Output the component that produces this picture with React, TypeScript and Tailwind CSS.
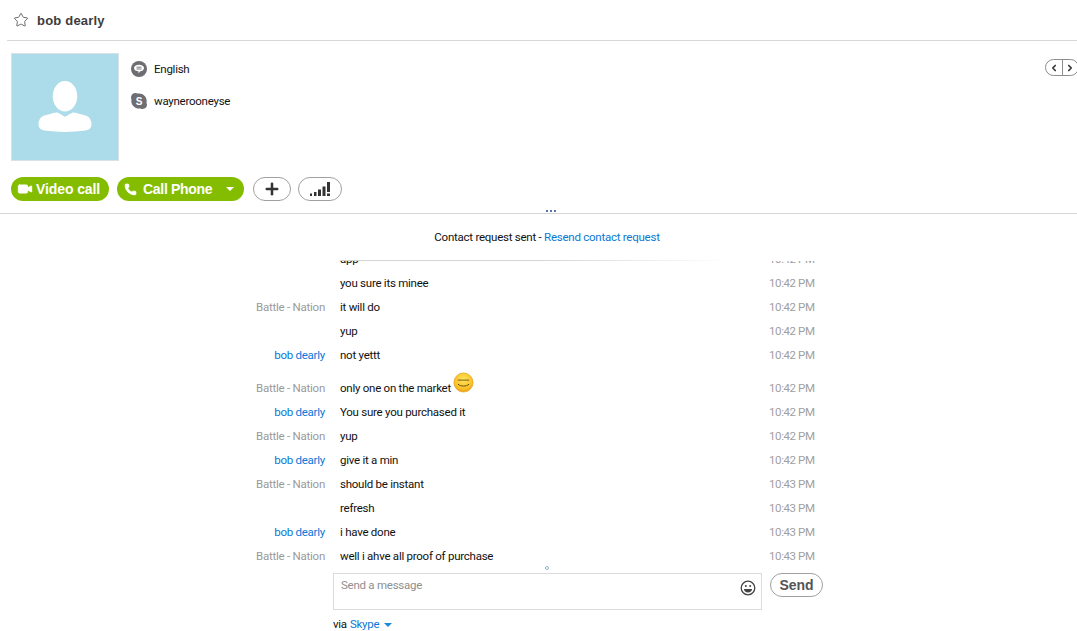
import React from 'react';
import { Star, Video, Phone, Plus, ChevronLeft, ChevronRight } from 'lucide-react';

interface ChatRow {
  name?: string;
  me?: boolean;
  text: string;
  time: string;
  emoticon?: boolean;
}

const rows: ChatRow[] = [
  { text: 'you sure its minee', time: '10:42 PM' },
  { name: 'Battle - Nation', text: 'it will do', time: '10:42 PM' },
  { text: 'yup', time: '10:42 PM' },
  { name: 'bob dearly', me: true, text: 'not yettt', time: '10:42 PM' },
  { name: 'Battle - Nation', text: 'only one on the market', time: '10:42 PM', emoticon: true },
  { name: 'bob dearly', me: true, text: 'You sure you purchased it', time: '10:42 PM' },
  { name: 'Battle - Nation', text: 'yup', time: '10:42 PM' },
  { name: 'bob dearly', me: true, text: 'give it a min', time: '10:42 PM' },
  { name: 'Battle - Nation', text: 'should be instant', time: '10:43 PM' },
  { text: 'refresh', time: '10:43 PM' },
  { name: 'bob dearly', me: true, text: 'i have done', time: '10:43 PM' },
  { name: 'Battle - Nation', text: 'well i ahve all proof of purchase', time: '10:43 PM' },
];

const Emoticon = () => (
  <svg viewBox="0 0 22 22" className="w-[21px] h-[21px] ml-[2px] mb-[13px] shrink-0">
    <defs>
      <radialGradient id="smile" cx="50%" cy="35%" r="70%">
        <stop offset="0%" stopColor="#fde45c" />
        <stop offset="70%" stopColor="#f8c025" />
        <stop offset="100%" stopColor="#e9920f" />
      </radialGradient>
    </defs>
    <circle cx="11" cy="11" r="10" fill="url(#smile)" stroke="#e8a020" strokeWidth="0.8" />
    <path d="M5.500 8.500h11" stroke="#6b4a10" strokeWidth="0.9" strokeLinecap="round" />
    <path d="M5.500 13c2.500 2.400 8.500 2.400 11 0" stroke="#6b4a10" strokeWidth="1" fill="none" strokeLinecap="round" />
  </svg>
);

const App: React.FC = () => {
  return (
    <div className="w-[1077px] h-[631px] overflow-hidden bg-white text-[11.5px] text-[#111] font-['Roboto',sans-serif] tracking-[-0.25px]">
      {/* Header */}
      <div className="ml-[7px] h-[41px] flex items-center pl-[6px] border-b border-[#d8d8d8]">
        <Star size={16} strokeWidth={1.3} className="text-[#555]" />
        <span className="ml-[8px] pt-[1px] text-[13px] font-bold text-[#3d3d3d] tracking-[0.2px] font-['Liberation_Sans',sans-serif]">bob dearly</span>
      </div>

      {/* Profile */}
      <div className="h-[173px] border-b border-[#d8d8d8] pl-[11px] pt-[12px]">
        <div className="flex">
          <div className="w-[108px] h-[108px] bg-[#acdbea] border border-[#d8e2e6] flex items-center justify-center">
            <svg viewBox="0 0 108 108" className="w-[106px] h-[106px]">
              <ellipse cx="54" cy="43" rx="12.500" ry="15.500" fill="#fff" />
              <path d="M27 72c0-6 3-9 9-10 5-1 8-3 11-2 3 1 5 3 7 4 2-1 4-3 7-4 3-1 6 1 11 2 6 1 9 4 9 10 0 3-2 5-6 6-14 2-28 2-42 0-4-1-6-3-6-6z" fill="#fff" />
            </svg>
          </div>
          <div className="ml-[12px] pt-[8px] flex-1 flex flex-col gap-[16px]">
            <div className="flex items-center h-[16px]">
              <svg viewBox="0 0 16 16" className="w-[16px] h-[16px]">
                <circle cx="8" cy="8" r="8" fill="#6d6d72" />
                <path d="M3 7c0-2 2-3.300 5-3.300S13 5 13 7s-2 3.300-3.800 3.300L7.500 12.500v-2.200C5 10.300 3 9 3 7z" fill="#fff" />
                <path d="M5.500 6.200h5M5.500 8h5" stroke="#6d6d72" strokeWidth="0.9" />
              </svg>
              <span className="ml-[7px] pt-[2px]">English</span>
            </div>
            <div className="flex items-center h-[16px]">
              <svg viewBox="0 0 16 16" className="w-[16px] h-[16px]">
                <path d="M4.500 0C2 0 0 2 0 4.500c0 .8.200 1.500.500 2.100C.400 7 .300 7.500.300 8c0 4.200 3.500 7.600 7.700 7.600.500 0 1-.1 1.500-.2.800.400 1.500.600 2.300.600 2.300 0 4.200-1.900 4.200-4.200 0-.7-.2-1.300-.5-1.900.100-.6.200-1.200.200-1.900C15.700 3.700 12.200.4 8 .4c-.5 0-.9 0-1.400.1C6 .2 5.300 0 4.500 0z" fill="#6d6d72" />
                <text x="8" y="12" textAnchor="middle" fontSize="10" fontWeight="700" fill="#fff" fontFamily="'Liberation Sans', sans-serif">S</text>
              </svg>
              <span className="ml-[7px] pt-[2px]">waynerooneyse</span>
            </div>
          </div>
          <div className="pt-[6px] -mr-[2px]">
            <div className="flex w-[34px] h-[17px] border border-[#8c8c8c] rounded-full overflow-hidden bg-white">
              <div className="flex-1 flex items-center justify-center border-r border-[#8c8c8c]">
                <ChevronLeft size={10} strokeWidth={4} className="text-[#333]" />
              </div>
              <div className="flex-1 flex items-center justify-center">
                <ChevronRight size={10} strokeWidth={4} className="text-[#333]" />
              </div>
            </div>
          </div>
        </div>

        {/* Actions */}
        <div className="mt-[16px] flex items-center font-['Liberation_Sans',sans-serif] tracking-normal">
          <button className="h-[24px] w-[98px] rounded-full bg-[#84bd00] text-white font-bold text-[14px] tracking-[-0.1px] flex items-center pl-[6px]">
            <Video size={16} fill="#fff" strokeWidth={1.5} />
            <span className="ml-[3px]">Video call</span>
          </button>
          <button className="ml-[8px] h-[24px] w-[127px] rounded-full bg-[#84bd00] text-white font-bold text-[14px] tracking-[-0.3px] flex items-center pl-[7px]">
            <Phone size={13} fill="#fff" strokeWidth={1.5} />
            <span className="ml-[6px]">Call Phone</span>
            <span className="ml-[14px] w-0 h-0 border-x-[4px] border-x-transparent border-t-[4px] border-t-white" />
          </button>
          <button className="ml-[9px] h-[24px] w-[38px] rounded-full border border-[#a0a0a0] flex items-center justify-center bg-white">
            <Plus size={18} strokeWidth={3.4} className="text-[#333]" />
          </button>
          <button className="ml-[7px] h-[24px] w-[44px] rounded-full border border-[#a0a0a0] flex items-center justify-center bg-white">
            <svg viewBox="0 0 20 14" className="w-[20px] h-[14px]">
              <path d="M0 11.500h2V14H0zM4 10h2.500v4H4zM8 7.500h3V14H8zM12.500 4.500h3V14h-3zM17 0h3v10h-3zM17 11.500h3V14h-3z" fill="#333" />
            </svg>
          </button>
        </div>
      </div>
      <div className="relative">
        <div className="absolute -top-[4px] left-[546px] w-[10px] h-[2px] flex gap-[2px]">
          <span className="w-[2px] h-[2px] bg-[#5a75a8]" />
          <span className="w-[2px] h-[2px] bg-[#5a75a8]" />
          <span className="w-[2px] h-[2px] bg-[#5a75a8]" />
        </div>
      </div>

      {/* Contact request notice */}
      <div className="h-[46px] ml-[250px] w-[600px] flex items-center justify-center pr-[6px] pt-[2px]">
        <span>Contact request sent - <span className="text-[#0a78d6]">Resend contact request</span></span>
      </div>

      {/* Conversation */}
      <div className="ml-[240px] w-[590px] h-[305px] overflow-hidden">
        <div className="ml-[100px] w-[390px] h-px bg-gradient-to-r from-[#d4d4d4] via-[#d4d4d4] to-transparent" />
        <div className="h-[10px] overflow-hidden flex">
          <div className="w-[100px]" />
          <div className="-mt-[13px] h-[24px] flex items-center flex-1">app</div>
          <div className="-mt-[13px] h-[24px] flex items-center w-[61px] text-[#a0a0a0] tracking-[-0.4px]">10:42 PM</div>
        </div>
        {rows.map((row, i) => (
          <div key={i} className={`flex items-center ${row.emoticon ? 'h-[33px] pt-[11px]' : 'h-[24px] pt-[2px]'}`}>
            <div className={`w-[85px] text-right ${row.me ? 'text-[#0a78d6]' : 'text-[#9a9a9a]'}`}>{row.name}</div>
            <div className="ml-[15px] flex-1 flex items-center">
              <span>{row.text}</span>
              {row.emoticon && <Emoticon />}
            </div>
            <div className="w-[61px] text-[#a0a0a0] tracking-[-0.4px]">{row.time}</div>
          </div>
        ))}
      </div>

      {/* Resize handle */}
      <div className="ml-[545px] mt-[1px] w-[4px] h-[4px] rounded-full border border-[#8fb8c8]" />

      {/* Composer */}
      <div className="ml-[333px] mt-[3px] w-[490px] flex items-start">
        <div className="w-[429px] h-[37px] border border-[#dcdcdc] flex justify-between pl-[7px] pr-[5px] pt-[3px] text-[#8f8f8f]">
          <span>Send a message</span>
          <svg viewBox="0 0 16 16" className="w-[16px] h-[16px] mt-[3px]">
            <circle cx="8" cy="8" r="6.800" fill="none" stroke="#444" strokeWidth="1.300" />
            <circle cx="5.800" cy="6" r="1" fill="#444" />
            <circle cx="10.200" cy="6" r="1" fill="#444" />
            <path d="M4 9h8c0 2-1.800 3.500-4 3.500S4 11 4 9z" fill="#444" />
          </svg>
        </div>
        <button className="ml-[8px] w-[53px] h-[24px] rounded-full border border-[#a0a0a0] text-[14px] font-bold text-[#555] flex items-center justify-center font-['Liberation_Sans',sans-serif] tracking-normal">
          Send
        </button>
      </div>
      <div className="ml-[333px] mt-[6px] flex items-center">
        <span>via</span>
        <span className="ml-[3px] text-[#0a78d6]">Skype</span>
        <span className="ml-[5px] w-0 h-0 border-x-[4px] border-x-transparent border-t-[4px] border-t-[#1a8ad4]" />
      </div>
    </div>
  );
};

export default App;
